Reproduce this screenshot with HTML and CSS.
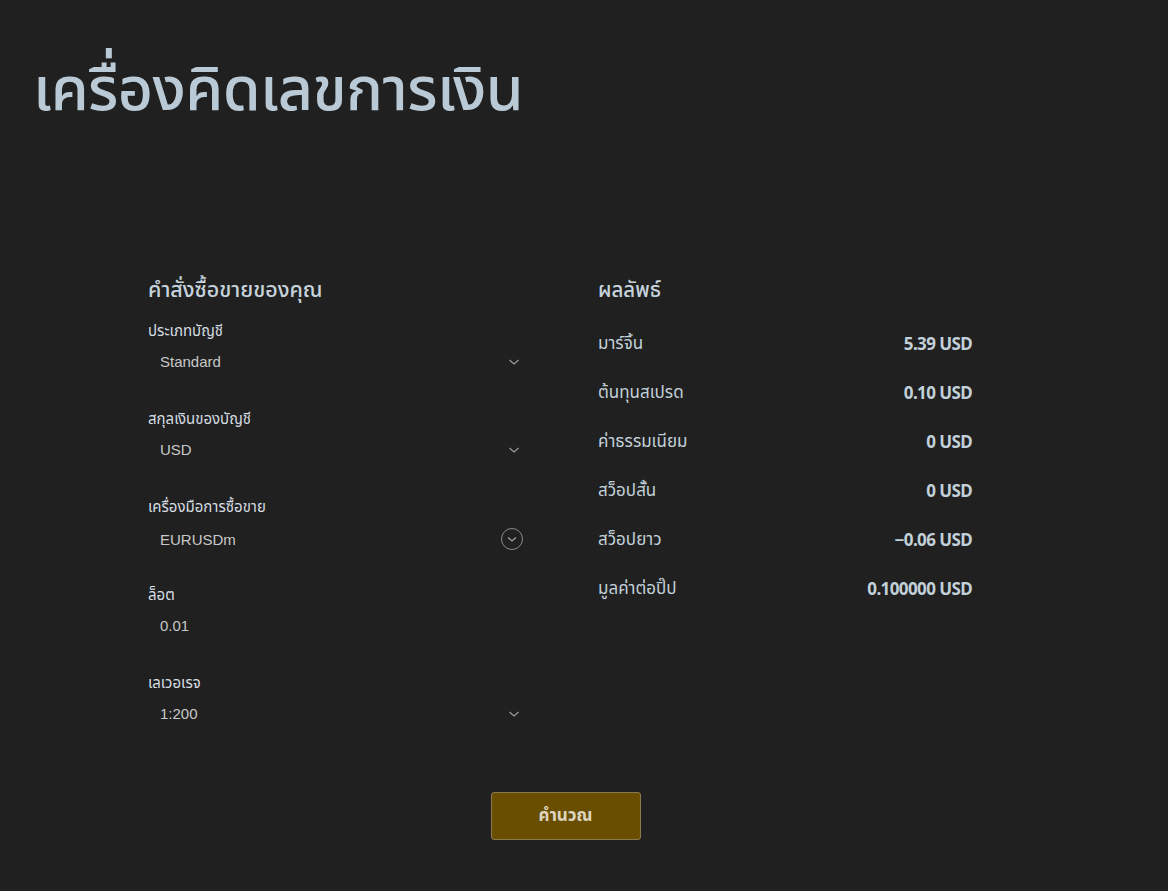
FILE: index.html
```html
<!DOCTYPE html>
<html lang="th">
<head>
<meta charset="utf-8">
<title>เครื่องคิดเลขการเงิน</title>
<link rel="stylesheet" href="styles.css">
</head>
<body>
<main class="page">
  <h1 class="title">เครื่องคิดเลขการเงิน</h1>
  <div class="calc">
    <section class="form">
      <h2 class="heading">คำสั่งซื้อขายของคุณ</h2>
      <div class="field">
        <div class="label">ประเภทบัญชี</div>
        <div class="select"><span>Standard</span>
          <svg class="chev" width="12" height="8" viewBox="0 0 12 8"><path d="M1.5 2 6 6 10.5 2" fill="none" stroke="#9a9a9a" stroke-width="1.3"/></svg>
        </div>
      </div>
      <div class="field">
        <div class="label">สกุลเงินของบัญชี</div>
        <div class="select"><span>USD</span>
          <svg class="chev" width="12" height="8" viewBox="0 0 12 8"><path d="M1.5 2 6 6 10.5 2" fill="none" stroke="#9a9a9a" stroke-width="1.3"/></svg>
        </div>
      </div>
      <div class="field">
        <div class="label">เครื่องมือการซื้อขาย</div>
        <div class="select select-search"><span>EURUSDm</span>
          <svg class="chev-circle" width="24" height="24" viewBox="0 0 24 24"><circle cx="12" cy="12" r="10.5" fill="none" stroke="#8a8a8a" stroke-width="1"/><path d="M8 10.5 12 14 16 10.5" fill="none" stroke="#a0a0a0" stroke-width="1.3"/></svg>
        </div>
      </div>
      <div class="field">
        <div class="label">ล็อต</div>
        <div class="select"><span>0.01</span></div>
      </div>
      <div class="field">
        <div class="label">เลเวอเรจ</div>
        <div class="select"><span>1:200</span>
          <svg class="chev" width="12" height="8" viewBox="0 0 12 8"><path d="M1.5 2 6 6 10.5 2" fill="none" stroke="#9a9a9a" stroke-width="1.3"/></svg>
        </div>
      </div>
    </section>
    <section class="results">
      <h2 class="heading heading-sm">ผลลัพธ์</h2>
      <div class="row"><span class="rlabel">มาร์จิ้น</span><span class="rval">5.39 USD</span></div>
      <div class="row"><span class="rlabel">ต้นทุนสเปรด</span><span class="rval">0.10 USD</span></div>
      <div class="row"><span class="rlabel">ค่าธรรมเนียม</span><span class="rval">0 USD</span></div>
      <div class="row"><span class="rlabel">สว็อปสั้น</span><span class="rval">0 USD</span></div>
      <div class="row"><span class="rlabel">สว็อปยาว</span><span class="rval">−0.06 USD</span></div>
      <div class="row"><span class="rlabel">มูลค่าต่อปิ๊ป</span><span class="rval">0.100000 USD</span></div>
    </section>
  </div>
  <div class="actions">
    <button class="btn">คำนวณ</button>
  </div>
</main>
</body>
</html>
```

FILE: styles.css
```css
html, body {
  margin: 0;
  padding: 0;
  background: #202020;
  height: 100%;
}
body {
  font-family: "Noto Sans", "Noto Sans Thai", "DejaVu Sans", sans-serif;
  color: #c9d3da;
}
.page {
  padding: 47px 0 0 33px;
  box-sizing: border-box;
}
.title {
  margin: 0;
  font-size: 61px;
  font-weight: 500;
  line-height: 80px;
  color: #b9cad6;
  letter-spacing: -0.6px;
}
.calc {
  display: flex;
  margin-top: 146px;
  padding-left: 115px;
}
.form {
  width: 377px;
}
.results {
  margin-left: 73px;
  width: 374px;
}
.heading {
  margin: 0;
  font-size: 21.5px;
  font-weight: 500;
  line-height: 32px;
  color: #c6d3dc;
}
.heading-sm {
  font-size: 20.5px;
}
.form .heading {
  margin-bottom: 14px;
}
.results .heading {
  margin-bottom: 14px;
}
.field {
  height: 88px;
}
.label {
  font-size: 15px;
  line-height: 22px;
  color: #d5dde2;
}
.select {
  display: flex;
  align-items: center;
  justify-content: space-between;
  height: 40px;
  padding: 0 0 0 12px;
  font-family: "Liberation Sans", Arial, sans-serif;
  font-size: 15px;
  color: #c8c8c8;
}
.select-search {
  padding-top: 2px;
}
.chev {
  margin-right: 5px;
  margin-top: 2px;
}
.chev-circle {
  margin-right: 1px;
}
.row {
  display: flex;
  justify-content: space-between;
  align-items: center;
  height: 49px;
}
.rlabel {
  font-size: 17px;
  color: #c2d0d9;
}
.rval {
  font-size: 17px;
  font-weight: 700;
  color: #c2d0d9;
  letter-spacing: -0.6px;
}
.actions {
  display: flex;
  justify-content: center;
  margin-top: 33px;
  padding-right: 70px;
}
.btn {
  width: 150px;
  height: 48px;
  background: #6a4e00;
  border: 1px solid #8c7a4e;
  border-radius: 3px;
  color: #ddd5c0;
  font-family: inherit;
  font-size: 17px;
  font-weight: 700;
}
```
